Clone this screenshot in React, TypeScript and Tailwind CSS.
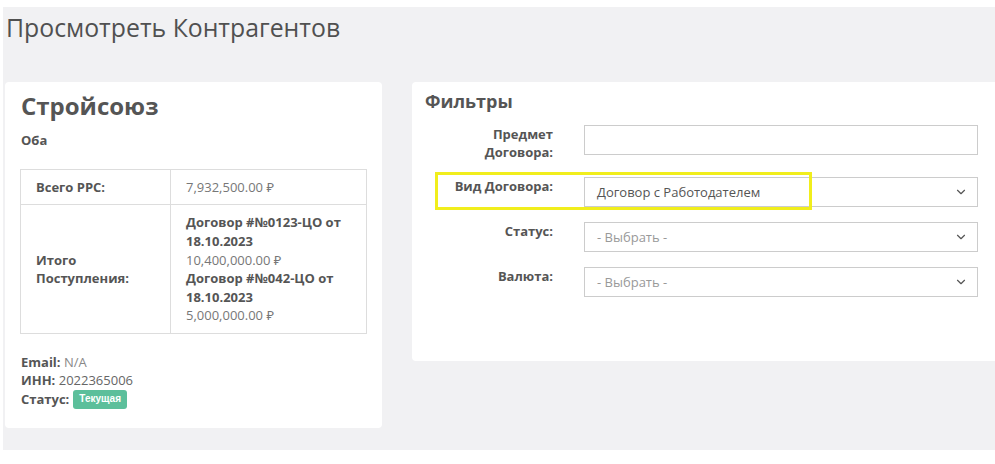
import React from 'react';
import { ChevronDown } from 'lucide-react';

const font = { fontFamily: '"Open Sans", "Noto Sans", Arial, sans-serif' };

function SelectBox({ value, placeholder }: { value?: string; placeholder?: string }) {
  return (
    <div className="w-[394px] h-[30px] border border-[#cccccc] bg-white flex items-center justify-between pl-[12px] pr-[9px]">
      <span className={value ? 'text-[#555]' : 'text-[#999]'}>{value ?? placeholder}</span>
      <ChevronDown className="w-[14px] h-[14px] text-[#555]" strokeWidth={2} />
    </div>
  );
}

function FilterRow({ label, children, highlight }: { label: React.ReactNode; children: React.ReactNode; highlight?: boolean }) {
  return (
    <div className="relative flex items-start mb-[15px]">
      <label className="w-[128px] shrink-0 text-right font-bold text-[#555]">{label}</label>
      <div className="ml-[31px] shrink-0">{children}</div>
      {highlight && (
        <div className="absolute left-[10px] top-[-5px] w-[377px] h-[38px] border-[3px] border-[#f1ee1c] pointer-events-none" />
      )}
    </div>
  );
}

export default function App() {
  return (
    <div className="w-[995px] h-[464px] bg-white overflow-hidden text-[13px] leading-[1.42857] text-[#555]" style={font}>
      <div className="mt-[7px] ml-[3px] h-[443px] w-[1000px] bg-[#f1f1f3] pt-[6.5px] pl-[3px]">
        {/* Page title */}
        <h1 className="text-[24.8px] leading-[26.4px] text-[#505050] font-normal">Просмотреть Контрагентов</h1>

        <div className="flex items-start mt-[42px] ml-[-1px]">
          {/* Counterparty card */}
          <div className="w-[377px] shrink-0 h-[346px] bg-white rounded-[4px] px-[15px] pt-[11px]">
            <h2 className="text-[24px] leading-[26.4px] font-bold text-[#555] pl-[1px]">Стройсоюз</h2>
            <div className="mt-[12px] font-bold pl-[1px]">Оба</div>

            <table className="w-full mt-[19px] border-collapse border border-[#dddddd]">
              <tbody>
                <tr>
                  <td className="w-[150px] border border-[#dddddd] px-[15px] py-[8px] font-bold align-middle">Всего РРС:</td>
                  <td className="border border-[#dddddd] px-[15px] py-[8px] text-[#777]">7,932,500.00 ₽</td>
                </tr>
                <tr>
                  <td className="border border-[#dddddd] px-[15px] py-[8px] font-bold align-middle">
                    Итого
                    <br />
                    Поступления:
                  </td>
                  <td className="border border-[#dddddd] px-[15px] py-[8px]">
                    <div className="font-bold text-[#555]">Договор #№0123-ЦО от 18.10.2023</div>
                    <div className="text-[#777]">10,400,000.00 ₽</div>
                    <div className="font-bold text-[#555]">Договор #№042-ЦО от 18.10.2023</div>
                    <div className="text-[#777]">5,000,000.00 ₽</div>
                  </td>
                </tr>
              </tbody>
            </table>

            <div className="mt-[19px] pl-[1px]">
              <div>
                <span className="font-bold">Email:</span> <span className="text-[#888]">N/A</span>
              </div>
              <div>
                <span className="font-bold">ИНН:</span> <span className="text-[#666]">2022365006</span>
              </div>
              <div className="flex items-center">
                <span className="font-bold">Статус:</span>
                <span
                  className="ml-[4px] inline-flex items-center h-[19px] px-[6px] rounded-[3px] bg-[#5cbf9b] text-white text-[10px] font-bold"
                  style={{ fontFamily: '"Liberation Sans", Arial, sans-serif' }}
                >
                  Текущая
                </span>
              </div>
            </div>
          </div>

          {/* Filters card */}
          <div className="ml-[30px] w-[600px] shrink-0 h-[279px] bg-white rounded-[4px] pl-[13px] pt-[10px]">
            <h3 className="text-[18px] leading-[19.8px] font-bold text-[#555]">Фильтры</h3>
            <div className="mt-[13px]">
              <FilterRow
                label={
                  <>
                    Предмет
                    <br />
                    Договора:
                  </>
                }
              >
                <div className="w-[394px] h-[30px] border border-[#cccccc] bg-white" />
              </FilterRow>
              <FilterRow label="Вид Договора:" highlight>
                <SelectBox value="Договор с Работодателем" />
              </FilterRow>
              <FilterRow label="Статус:">
                <SelectBox placeholder="- Выбрать -" />
              </FilterRow>
              <FilterRow label="Валюта:">
                <SelectBox placeholder="- Выбрать -" />
              </FilterRow>
            </div>
          </div>
        </div>
      </div>
    </div>
  );
}
